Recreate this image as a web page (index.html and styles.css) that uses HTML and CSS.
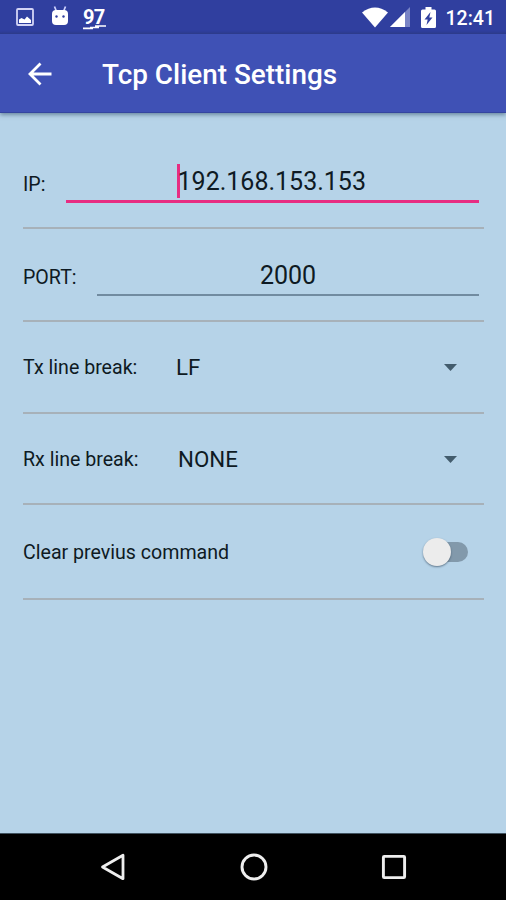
FILE: index.html
```html
<!DOCTYPE html>
<html lang="en">
<head>
<meta charset="utf-8">
<title>Tcp Client Settings</title>
<link rel="stylesheet" href="styles.css">
</head>
<body>
<div class="screen">
  <header class="status">
    <div class="notifications">
      <svg class="icon-picture" width="18" height="18" viewBox="0 0 18 18"><rect x="1" y="1" width="16" height="16" rx="1" fill="none" stroke="#d3d4f5" stroke-width="1.8"/><path d="M3 15V11.500L5.500 10l3 1.500L11 8.500 15 12v3z" fill="#fff"/></svg>
      <svg class="icon-droid" width="18" height="20" viewBox="0 0 18 20"><path d="M3.500 0.500l1.800 4.500M14.500 0.500l-1.800 4.500" stroke="#cfd4ff" stroke-width="1.700"/><path d="M1 8q0-4 4-4h8q4 0 4 4v7q0 4-4 4H5q-4 0-4-4z" fill="#fff"/><circle cx="5.500" cy="10.500" r="1.200" fill="#303f9f"/><circle cx="12.500" cy="10.500" r="1.200" fill="#303f9f"/></svg>
      <span class="battery-level">97<svg width="23" height="5" viewBox="0 0 23 5"><path d="M0 3.300h10M12 1h11M7 2.500h9" fill="none" stroke="#fff" stroke-width="1.700"/></svg></span>
    </div>
    <div class="system">
      <svg class="icon-wifi" width="26" height="21" viewBox="0 0 26 21"><path d="M0 5.500Q13-4.500 26 5.500L13 20.500z" fill="#fff"/></svg>
      <svg class="icon-signal" width="20" height="20" viewBox="0 0 20 20"><path d="M0 20L20 0v20z" fill="#7984c6"/><path d="M0 20L15 5v15z" fill="#fff"/></svg>
      <svg class="icon-battery" width="15" height="21" viewBox="0 0 15 21"><path d="M1.500 2.500H4.500V0h6v2.500h3q1.500 0 1.500 1.500v15.500q0 1.500-1.500 1.500h-12Q0 21 0 19.500V4q0-1.500 1.500-1.500z" fill="#fff"/><path d="M9.500 5L3.500 12.500h3.200L5.500 18l6-7.500H8.300z" fill="#303f9f"/></svg>
      <span class="clock">12:41</span>
    </div>
  </header>
  <div class="toolbar">
    <svg class="icon-back" width="24" height="24" viewBox="0 0 24 24"><path d="M23.500 12H2M12.500 1.500L2 12l10.500 10.500" fill="none" stroke="#fff" stroke-width="2.800"/></svg>
    <h1>Tcp Client Settings</h1>
  </div>
  <main>
    <section class="row row-ip">
      <span class="label">IP:</span>
      <div class="field focused"><span class="value">192.168.153.153</span></div>
    </section>
    <section class="row row-port">
      <span class="label">PORT:</span>
      <div class="field"><span class="value">2000</span></div>
    </section>
    <section class="row row-select">
      <span class="label">Tx line break:</span>
      <span class="choice">LF</span>
      <svg class="caret" width="13" height="7" viewBox="0 0 13 7"><path d="M0 0h13L6.500 7z" fill="#435c6d"/></svg>
    </section>
    <section class="row row-select">
      <span class="label">Rx line break:</span>
      <span class="choice">NONE</span>
      <svg class="caret" width="13" height="7" viewBox="0 0 13 7"><path d="M0 0h13L6.500 7z" fill="#435c6d"/></svg>
    </section>
    <section class="row row-switch">
      <span class="label">Clear previus command</span>
      <div class="switch"><div class="thumb"></div></div>
    </section>
  </main>
  <nav>
    <svg width="26" height="28" viewBox="0 0 26 28"><path d="M23 2.300v23.400L2.500 14z" fill="none" stroke="#eee" stroke-width="2.800" stroke-linejoin="round"/></svg>
    <svg width="28" height="28" viewBox="0 0 28 28"><circle cx="14" cy="14" r="12" fill="none" stroke="#eee" stroke-width="2.900"/></svg>
    <svg width="26" height="26" viewBox="0 0 26 26"><rect x="2.400" y="2.400" width="21.200" height="21.200" rx="0.800" fill="none" stroke="#eee" stroke-width="2.900"/></svg>
  </nav>
</div>
</body>
</html>
```
FILE: styles.css
```css
* { box-sizing: border-box; }
body { margin: 0; font-family: Roboto, "Liberation Sans", sans-serif; }
svg { display: block; flex: none; }
.screen { width: 506px; height: 900px; display: flex; flex-direction: column; background: #b6d3e8; color: #0e1a23; overflow: hidden; }
.status { height: 34px; flex: none; display: flex; justify-content: space-between; background: linear-gradient(#303f9f 31px, #2c398c); color: #fff; padding: 0 11px 0 16px; }
.notifications, .system { display: flex; }
.icon-picture { margin-top: 8px; }
.icon-droid { margin: 6px 0 0 17px; }
.battery-level { margin: 7px 0 0 14px; width: 23px; font-size: 20px; line-height: 20px; font-weight: 700; letter-spacing: -0.6px; white-space: nowrap; }
.battery-level svg { margin-top: -2px; }
.icon-wifi { margin-top: 7px; }
.icon-signal { margin: 7px 0 0 2px; }
.icon-battery { margin: 7px 0 0 11px; }
.clock { margin: 7px 0 0 10px; font-size: 19.5px; line-height: 23px; font-weight: 500; }
.toolbar { height: 79px; flex: none; display: flex; align-items: center; background: #3f51b5; border-bottom: 1px solid #34459f; padding: 2px 0 0 28px; box-shadow: 0 2px 4px rgba(50, 80, 105, .55); position: relative; }
h1 { margin: 2px 0 0 50px; color: #fff; font-size: 27.9px; line-height: 32px; font-weight: 500; white-space: nowrap; }
main { flex: 1; padding: 0 22px 0 23px; }
.row { display: flex; border-bottom: 2px solid #a7b1b9; }
.label { flex: none; font-size: 19.6px; line-height: 24px; white-space: nowrap; }
.field { flex: 1; height: 40px; margin-right: 5px; border-bottom: 2px solid #718ba0; text-align: center; }
.value { display: inline-block; font-size: 25px; line-height: 38px; }
.focused { border-bottom: 3px solid #e72d82; }
.focused .value { background: linear-gradient(#e72d82, #e72d82) no-repeat 0 1px / 3px 34px; margin-left: -2px; padding-left: 1px; }
.row-ip { height: 116px; padding-top: 50px; }
.row-ip .label { width: 42.5px; margin-top: 10px; }
.row-port { height: 93px; padding-top: 28px; }
.row-port .label { width: 74px; margin-top: 9px; }
.row-port .field { height: 39px; }
.row-select { height: 91.5px; align-items: center; }
.row-select .label { width: 153px; padding-top: 2px; }
.row-select:nth-child(4) .label { width: 155px; padding-top: 3px; }
.choice { flex: 1; font-size: 22.3px; line-height: 28px; padding-top: 1px; }
.caret { margin: 2px 27px 0 0; }
.row-switch { height: 95px; align-items: center; justify-content: space-between; }
.row-switch .label { padding-top: 3px; }
.switch { width: 42px; height: 20px; border-radius: 10px; background: #8299ab; margin-right: 16px; display: flex; align-items: center; }
.thumb { width: 28px; height: 28px; flex: none; margin-left: -3px; border-radius: 50%; background: #ececec; box-shadow: 0 1px 2px rgba(40, 60, 80, .6); }
nav { height: 67px; flex: none; background: #000; border-top: 1px solid #40525f; display: flex; justify-content: space-between; align-items: center; padding: 0 99px 0 100px; }
```
